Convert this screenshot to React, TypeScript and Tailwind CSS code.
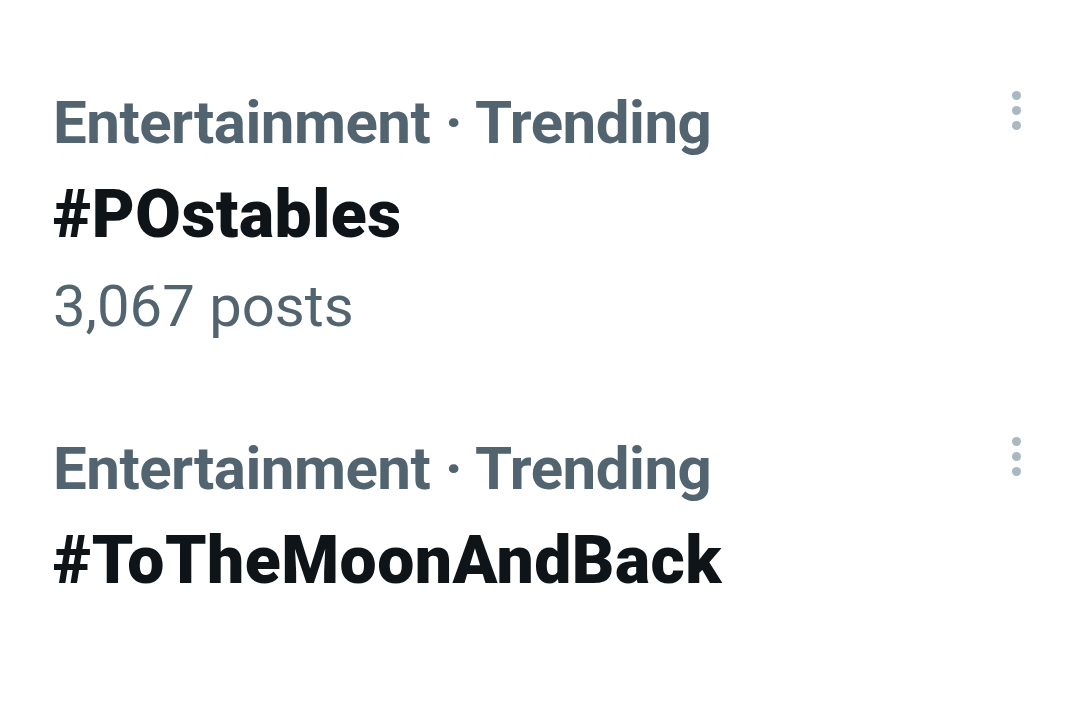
import React from "react";

function Dots() {
  return (
    <div className="flex flex-col items-center gap-[6px] pt-[14px]">
      <span className="block w-[9px] h-[9px] rounded-full bg-[#aab8c2]" />
      <span className="block w-[9px] h-[9px] rounded-full bg-[#aab8c2]" />
      <span className="block w-[9px] h-[9px] rounded-full bg-[#aab8c2]" />
    </div>
  );
}

function Trend({ tag, posts }: { tag: string; posts?: string }) {
  return (
    <div className="flex justify-between pl-[53px] pr-[59px]">
      <div className="flex flex-col leading-[92px] text-[60px]">
        <div className="font-bold text-[#536471] tracking-[-0.5px]">Entertainment · Trending</div>
        <div className="font-black text-[66px] leading-[90px] pt-[1px] tracking-[0.5px] text-[#0f1419]">{tag}</div>
        {posts && <div className="font-normal text-[58px] text-[#536471]">{posts}</div>}
      </div>
      <Dots />
    </div>
  );
}

export default function App() {
  return (
    <div
      className="w-[1080px] h-[704px] bg-white overflow-hidden pt-[77px] flex flex-col gap-[71px]"
      style={{ fontFamily: "Roboto, 'Noto Sans', sans-serif" }}
    >
      <Trend tag="#POstables" posts="3,067 posts" />
      <Trend tag="#ToTheMoonAndBack" />
    </div>
  );
}
